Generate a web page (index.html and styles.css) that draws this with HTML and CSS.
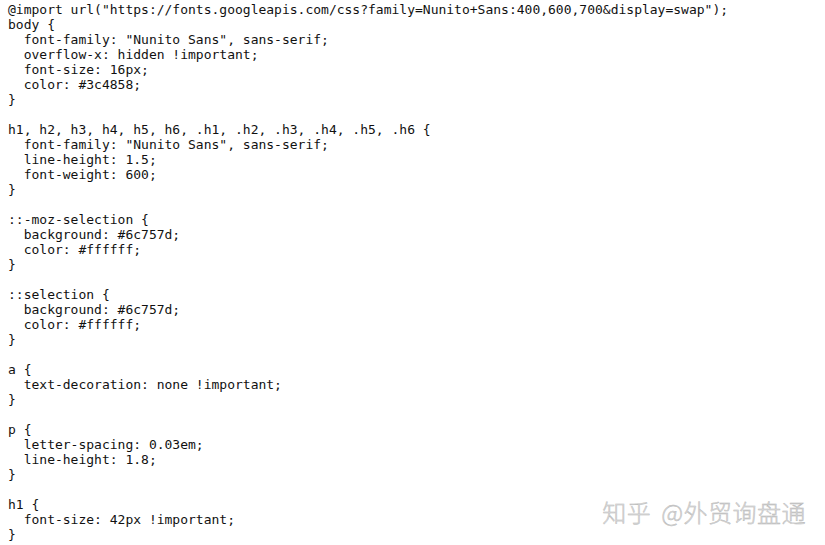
FILE: index.html
```
<!DOCTYPE html>
<html>
<head>
<meta charset="utf-8">
<link rel="stylesheet" href="styles.css">
</head>
<body>
<div class="code">
<div class="ln">@import url("https://fonts.googleapis.com/css?family=Nunito+Sans:400,600,700&amp;display=swap");</div>
<div class="ln">body {</div>
<div class="ln">  font-family: "Nunito Sans", sans-serif;</div>
<div class="ln">  overflow-x: hidden !important;</div>
<div class="ln">  font-size: 16px;</div>
<div class="ln">  color: #3c4858;</div>
<div class="ln">}</div>
<div class="ln"> </div>
<div class="ln">h1, h2, h3, h4, h5, h6, .h1, .h2, .h3, .h4, .h5, .h6 {</div>
<div class="ln">  font-family: "Nunito Sans", sans-serif;</div>
<div class="ln">  line-height: 1.5;</div>
<div class="ln">  font-weight: 600;</div>
<div class="ln">}</div>
<div class="ln"> </div>
<div class="ln">::-moz-selection {</div>
<div class="ln">  background: #6c757d;</div>
<div class="ln">  color: #ffffff;</div>
<div class="ln">}</div>
<div class="ln"> </div>
<div class="ln">::selection {</div>
<div class="ln">  background: #6c757d;</div>
<div class="ln">  color: #ffffff;</div>
<div class="ln">}</div>
<div class="ln"> </div>
<div class="ln">a {</div>
<div class="ln">  text-decoration: none !important;</div>
<div class="ln">}</div>
<div class="ln"> </div>
<div class="ln">p {</div>
<div class="ln">  letter-spacing: 0.03em;</div>
<div class="ln">  line-height: 1.8;</div>
<div class="ln">}</div>
<div class="ln"> </div>
<div class="ln">h1 {</div>
<div class="ln">  font-size: 42px !important;</div>
<div class="ln">}</div>
</div>
<div class="watermark"><span>知乎</span><span>@外贸询盘通</span></div>
</body>
</html>
```
FILE: styles.css
```
html, body {
  margin: 0;
  padding: 0;
  background: #ffffff;
  width: 825px;
  height: 545px;
  overflow: hidden;
}
body {
  position: relative;
}
.code {
  display: flex;
  flex-direction: column;
  align-items: flex-start;
  padding: 2px 0 0 8px;
  font-family: "DejaVu Sans Mono", "Liberation Mono", monospace;
  font-size: 13px;
  line-height: 15px;
  color: #111111;
}
.ln {
  white-space: pre;
  min-height: 15px;
}
.watermark {
  position: absolute;
  right: 19px;
  bottom: 19px;
  display: flex;
  gap: 10px;
  font-family: "Noto Sans CJK SC", sans-serif;
  font-size: 24px;
  line-height: 28px;
  font-weight: 300;
  color: #dadada;
  -webkit-text-stroke: 0.4px #b4b4b4;
  letter-spacing: 0.5px;
}
```
